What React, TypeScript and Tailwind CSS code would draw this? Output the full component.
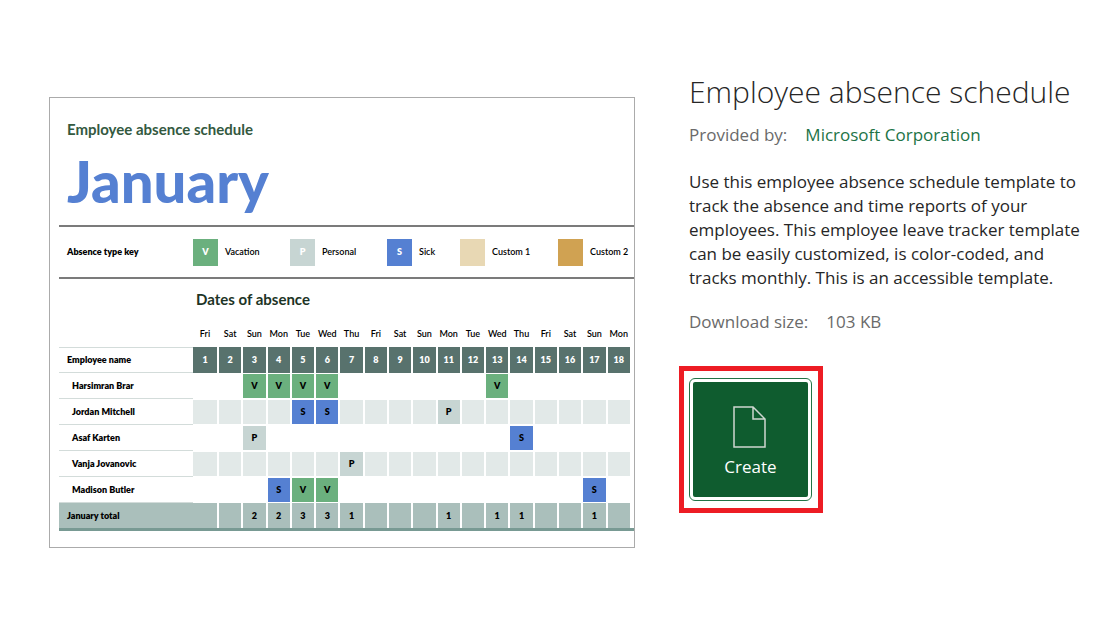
import React from "react";

type AbsenceCode = "V" | "P" | "S";

interface EmployeeRow {
  name: string;
  absences: Record<number, AbsenceCode>;
}

const weekdays = ["Fri", "Sat", "Sun", "Mon", "Tue", "Wed", "Thu"];
const days = Array.from({ length: 18 }, (_, i) => i + 1);

const absenceTypes = [
  { code: "V", label: "Vacation", swatch: "bg-[#6bb07e]" },
  { code: "P", label: "Personal", swatch: "bg-[#c7d5d3]" },
  { code: "S", label: "Sick", swatch: "bg-[#5580d2]" },
  { code: "", label: "Custom 1", swatch: "bg-[#e8d8b4]" },
  { code: "", label: "Custom 2", swatch: "bg-[#d0a252]" },
];

const codeColors: Record<AbsenceCode, string> = {
  V: "bg-[#6bb07e]",
  P: "bg-[#c7d5d3]",
  S: "bg-[#5580d2]",
};

const employees: EmployeeRow[] = [
  { name: "Harsimran Brar", absences: { 3: "V", 4: "V", 5: "V", 6: "V", 13: "V" } },
  { name: "Jordan Mitchell", absences: { 5: "S", 6: "S", 11: "P" } },
  { name: "Asaf Karten", absences: { 3: "P", 14: "S" } },
  { name: "Vanja Jovanovic", absences: { 7: "P" } },
  { name: "Madison Butler", absences: { 4: "S", 5: "V", 6: "V", 17: "S" } },
];

const countAbsences = (day: number) =>
  employees.filter((employee) => employee.absences[day]).length;

// Legend between the two rules
const AbsenceKey: React.FC = () => (
  <div className="grid h-[54px] grid-cols-[134px_97px_97px_73px_98px_1fr] items-center border-y-2 border-[#7b7b7b] text-[9px] text-black">
    <span className="pl-2 font-extrabold">Absence type key</span>
    {absenceTypes.map((type) => (
      <div key={type.label} className="flex items-center gap-[7px] whitespace-nowrap font-semibold">
        <span className={`flex h-[27px] w-[25px] shrink-0 items-center justify-center font-extrabold text-white ${type.swatch}`}>
          {type.code}
        </span>
        {type.label}
      </div>
    ))}
  </div>
);

// Day grid with one row per employee
const AbsenceTable: React.FC = () => (
  <table className="w-full table-fixed border-separate border-spacing-0 text-[9px] leading-3 text-black">
    <colgroup>
      <col className="w-[134px]" />
      {days.map((day) => (
        <col key={day} className={day === 1 ? "w-[26px]" : undefined} />
      ))}
      <col className="w-0.5" />
    </colgroup>
    <thead>
      <tr className="h-[26px]">
        <td />
        {days.map((day) => (
          <th key={day} className="pr-0.5 font-semibold">
            {weekdays[(day - 1) % 7]}
          </th>
        ))}
        <td />
      </tr>
      <tr className="h-[26px]">
        <th scope="col" className="border-y border-[#d3dcda] pl-2 text-left font-extrabold">
          Employee name
        </th>
        {days.map((day) => (
          <th key={day} scope="col" className="border-r-2 border-white bg-[#58726d] bg-clip-padding font-extrabold text-white">
            {day}
          </th>
        ))}
        <td />
      </tr>
    </thead>
    <tbody>
      {employees.map((employee, index) => {
        const emptyColor = index % 2 === 1 ? "bg-[#e2e9e8]" : "bg-white";
        return (
          <tr key={employee.name} className="h-[26px]">
            <th scope="row" className="border-b border-[#d3dcda] pl-[13px] text-left font-extrabold">
              {employee.name}
            </th>
            {days.map((day) => {
              const code = employee.absences[day];
              return (
                <td
                  key={day}
                  className={`border-t border-r-2 border-b border-white bg-clip-padding text-center font-extrabold ${
                    code ? codeColors[code] : emptyColor
                  }`}
                >
                  {code}
                </td>
              );
            })}
            <td />
          </tr>
        );
      })}
    </tbody>
    <tfoot>
      <tr className="h-[25px]">
        <th scope="row" className="bg-[#aabfbb] pl-2 text-left font-extrabold">
          January total
        </th>
        {days.map((day) => (
          <td key={day} className="border-r-2 border-white bg-[#aabfbb] bg-clip-padding text-center font-extrabold">
            {countAbsences(day) || ""}
          </td>
        ))}
        <td />
      </tr>
    </tfoot>
  </table>
);

const TemplatePreview: React.FC = () => (
  <section className="w-[586px] shrink-0 border border-[#ababab] pt-[21px] pb-4 pl-[9px] font-[Lato,sans-serif]">
    <h2 className="pl-2 text-[15px] leading-5 font-bold text-[#34593f]">Employee absence schedule</h2>
    <p className="mt-0.5 mb-1 pl-2 text-[58px] leading-20 font-black text-[#5580d2]">January</p>
    <AbsenceKey />
    <h3 className="mt-2.5 mb-3 pl-[137px] text-[15px] leading-5 font-bold text-[#1d3426]">Dates of absence</h3>
    <AbsenceTable />
    <div className="h-[3px] bg-[#789a93]" />
  </section>
);

const TemplateDetails: React.FC = () => (
  <section className="min-w-0 flex-1 pt-[72px] pr-6 text-[17px] leading-6 text-[#262626]">
    <div className="px-2.5">
      <h1 className="text-[30px] leading-10 font-light whitespace-nowrap">Employee absence schedule</h1>
      <p className="mt-[11px] flex gap-[18px] text-[#6a6a6a]">
        Provided by:
        <a href="#" className="text-[#217346]">
          Microsoft Corporation
        </a>
      </p>
      <p className="mt-[23px] -mr-2.5">
        Use this employee absence schedule template to track the absence and time reports of your employees. This
        employee leave tracker template can be easily customized, is color-coded, and tracks monthly. This is an
        accessible template.
      </p>
      <p className="mt-5 flex gap-[18px] text-[#6a6a6a]">
        <span>Download size:</span>
        <span>103 KB</span>
      </p>
    </div>
    {/* Highlighted call to action */}
    <div className="mt-8 w-fit border-5 border-[#ed1c24] p-[5px] pt-[7px] pr-1.5 pb-[7px]">
      <button className="flex h-[123px] w-[123px] flex-col items-center rounded-md border border-[#217346] bg-white p-[3px]">
        <span className="flex w-full flex-1 flex-col items-center rounded-xs bg-[#0f5c2f] pt-6 text-white">
          <svg width="35" height="42" viewBox="0 0 35 42" fill="none" stroke="#cfd6d1" strokeWidth="1.5">
            <path d="M1 1H20L32 13V41H1ZM20 1V13H32" />
          </svg>
          <span className="mt-[7px]">Create</span>
        </span>
      </button>
    </div>
  </section>
);

export default function App() {
  return (
    <main className="flex min-h-screen items-start gap-11 bg-white pl-[49px] font-['Open_Sans',sans-serif]">
      <div className="pt-[97px]">
        <TemplatePreview />
      </div>
      <TemplateDetails />
    </main>
  );
}
